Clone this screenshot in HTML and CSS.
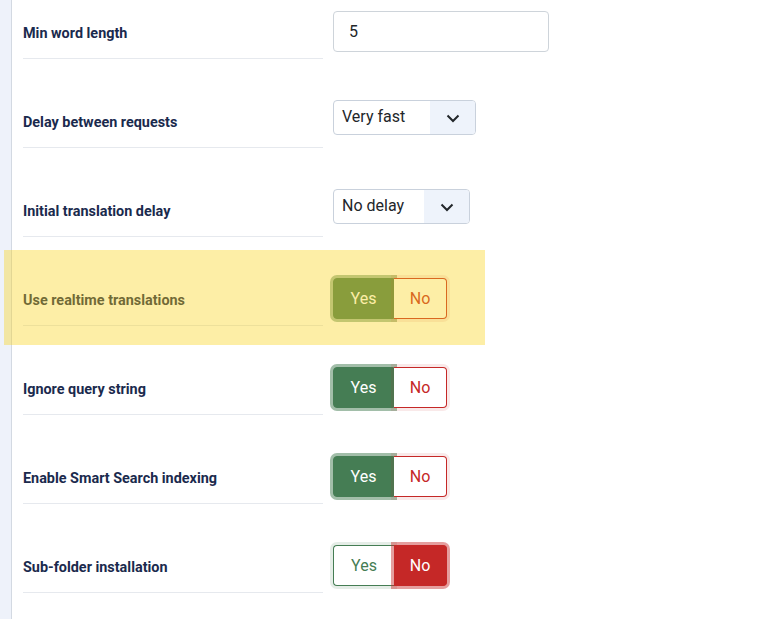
FILE: index.html
```html
<!DOCTYPE html>
<html lang="en">
<head>
<meta charset="utf-8">
<title>Options</title>
<link rel="stylesheet" href="styles.css">
</head>
<body>
<div class="page">
  <aside class="strip"></aside>
  <main class="form">
    <div class="row">
      <div class="label">Min word length</div>
      <div class="control"><div class="input">5</div></div>
    </div>
    <div class="row">
      <div class="label">Delay between requests</div>
      <div class="control">
        <div class="select sel-speed"><span class="sel-text">Very fast</span><span class="sel-arrow"><svg width="14" height="9" viewBox="0 0 14 9"><polyline points="1.5,1.5 7,7 12.5,1.5" fill="none" stroke="#22262a" stroke-width="2"/></svg></span></div>
      </div>
    </div>
    <div class="row">
      <div class="label">Initial translation delay</div>
      <div class="control">
        <div class="select sel-delay"><span class="sel-text">No delay</span><span class="sel-arrow"><svg width="14" height="9" viewBox="0 0 14 9"><polyline points="1.5,1.5 7,7 12.5,1.5" fill="none" stroke="#22262a" stroke-width="2"/></svg></span></div>
      </div>
    </div>
    <div class="row highlighted">
      <div class="label">Use realtime translations</div>
      <div class="control">
        <div class="switch"><span class="seg yes on">Yes</span><span class="seg no">No</span></div>
      </div>
      <div class="hl-overlay"></div>
    </div>
    <div class="row">
      <div class="label">Ignore query string</div>
      <div class="control">
        <div class="switch"><span class="seg yes on">Yes</span><span class="seg no">No</span></div>
      </div>
    </div>
    <div class="row">
      <div class="label">Enable Smart Search indexing</div>
      <div class="control">
        <div class="switch"><span class="seg yes on">Yes</span><span class="seg no">No</span></div>
      </div>
    </div>
    <div class="row">
      <div class="label">Sub-folder installation</div>
      <div class="control">
        <div class="switch"><span class="seg yes">Yes</span><span class="seg no on">No</span></div>
      </div>
    </div>
  </main>
</div>
</body>
</html>
```

FILE: styles.css
```css
* { box-sizing: border-box; }
html, body { margin: 0; padding: 0; background: #fff; }
body { font-family: Roboto, "Noto Sans", sans-serif; color: #22262a; overflow: hidden; }
.page { display: flex; min-height: 619px; }
.strip { width: 12px; flex: none; background: #eef2fa; border-right: 1px solid #d3d9e2; }
.form { padding-left: 11px; flex: 1; }
.row { position: relative; display: flex; gap: 10px; margin-bottom: 30px; }
.label {
  width: 300px; flex: none;
  padding-top: 25px; padding-bottom: 15px;
  line-height: 18px; height: 59px;
  font-size: 14.4px; font-weight: 700; color: #1a2a4d;
  border-bottom: 1px solid #e6e9ee;
}
.control { padding-top: 11px; }
.input {
  width: 216px; height: 41px;
  border: 1px solid #ced4da; border-radius: 4px;
  padding-left: 15px; font-size: 16px; line-height: 39px; color: #22262a;
}
.select {
  display: flex; height: 35px;
  border: 1px solid #c9d1dc; border-radius: 4px; overflow: hidden;
  font-size: 16px; color: #22262a;
}
.sel-speed { width: 143px; }
.sel-delay { width: 137px; }
.sel-text { flex: 1; padding-left: 8px; line-height: 31px; }
.sel-arrow { width: 45px; background: #eef3fb; display: flex; align-items: center; justify-content: center; }
.sel-arrow svg { display: block; margin-top: 1px; }
.switch { display: flex; height: 41px; font-size: 16px; }
.seg { display: flex; align-items: center; justify-content: center; border: 1px solid; }
.seg.yes { width: 61px; border-radius: 4px 0 0 4px; border-color: #457d54; color: #457d54; background: #fff; box-shadow: 0 0 0 3px rgba(69,125,84,0.14); }
.seg.no { width: 53px; border-radius: 0 4px 4px 0; border-color: #c52827; color: #c52827; background: #fff; box-shadow: 0 0 0 3px rgba(197,40,39,0.1); border-left: none; }
.seg.yes.on { background: #457d54; color: #fff; box-shadow: 0 0 0 3px rgba(69,125,84,0.5); }
.seg.no.on { background: #c52827; color: #fff; box-shadow: 0 0 0 3px rgba(197,40,39,0.45); }
.seg.yes:not(.on) { border-right: none; }
.hl-overlay {
  position: absolute; left: -19px; top: -17px; width: 481px; height: 95px;
  background: rgba(250, 210, 22, 0.38); pointer-events: none;
}
```
